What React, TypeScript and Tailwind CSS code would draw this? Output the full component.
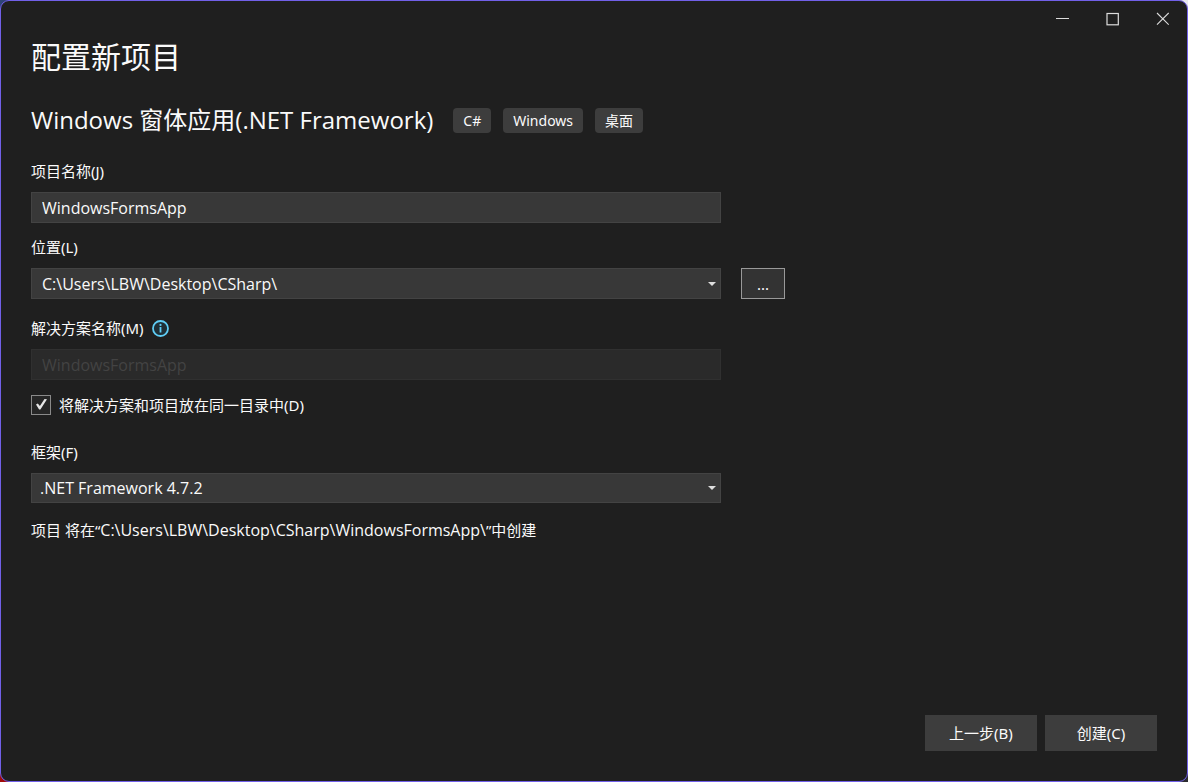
import React, { useState } from 'react';

const TAGS = ['C#', 'Windows', '桌面'];

const LOCATIONS = ['C:\\Users\\LBW\\Desktop\\CSharp\\'];

const FRAMEWORKS = ['.NET Framework 4.7.2'];

const fieldClass = "block w-full rounded-none border border-[#434343] bg-[#383838] font-['Open_Sans','Noto_Sans_CJK_SC',sans-serif] text-base text-[#fafafa] outline-none";

interface FieldProps {
  id: string;
  label: string;
  icon?: React.ReactNode;
  className?: string;
  children: React.ReactNode;
}

const Field: React.FC<FieldProps> = ({ id, label, icon, className = '', children }) => (
  <div className={className}>
    <div className="mb-[9px] flex items-center gap-2">
      <label htmlFor={id} className="leading-6">{label}</label>
      {icon}
    </div>
    {children}
  </div>
);

interface ComboProps {
  id: string;
  options: string[];
  className: string;
}

const Combo: React.FC<ComboProps> = ({ id, options, className }) => (
  <div className="relative w-full max-w-[690px]">
    <select id={id} className={`${fieldClass} ${className} appearance-none pr-6`}>
      {options.map((option) => (
        <option key={option}>{option}</option>
      ))}
    </select>
    <svg className="pointer-events-none absolute top-1/2 right-[5px] -translate-y-1/2" width="8" height="4" viewBox="0 0 8 4">
      <path d="M0 0h8L4 4z" fill="#dedede" />
    </svg>
  </div>
);

const InfoIcon = () => (
  <svg width="17" height="17" viewBox="0 0 17 17" fill="none">
    <circle cx="8.5" cy="8.5" r="7.5" fill="#1f2f36" stroke="#5fcdf5" strokeWidth="1.8" />
    <path d="M8.5 7v5.5" stroke="#5fcdf5" strokeWidth="1.8" />
    <circle cx="8.5" cy="4.9" r="1.1" fill="#5fcdf5" />
  </svg>
);

const WindowControls = () => (
  <header className="flex h-9 justify-end">
    <button type="button" aria-label="最小化" className="flex w-[50px] items-center justify-center">
      <svg width="14" height="14" viewBox="0 0 14 14">
        <path d="M1 6.5h13" stroke="#dcdcdc" />
      </svg>
    </button>
    <button type="button" aria-label="最大化" className="flex w-[50px] items-center justify-center">
      <svg width="14" height="14" viewBox="0 0 14 14">
        <rect x="2" y="1.5" width="11.3" height="11.3" fill="none" stroke="#dcdcdc" strokeWidth="1.2" />
      </svg>
    </button>
    <button type="button" aria-label="关闭" className="flex w-[50px] items-center justify-center">
      <svg width="14" height="14" viewBox="0 0 14 14">
        <path d="M2 1l11.7 11.7M13.7 1L2 12.7" stroke="#dcdcdc" strokeWidth="1.1" />
      </svg>
    </button>
  </header>
);

const App: React.FC = () => {
  const [name, setName] = useState('WindowsFormsApp');
  const [sameFolder, setSameFolder] = useState(true);

  return (
    <div className="flex min-h-screen bg-[conic-gradient(#e8e8ee_25%,#2c2c30_0_50%,#a00a0a_0_75%,#2f4477_0)] font-['Noto_Sans','Noto_Sans_CJK_SC',sans-serif] text-[15px] text-[#fafafa]">
      <div className="flex flex-1 flex-col rounded-[9px] border border-[#7160e8] bg-[#1f1f1f]">
        <WindowControls />

        <main className="flex-1 px-[30px]">
          <h1 className="text-[30px] leading-10">配置新项目</h1>

          <div className="mt-[27px] flex flex-wrap items-center gap-x-5">
            <h2 className="font-['Open_Sans','Noto_Sans_CJK_SC',sans-serif] text-2xl leading-8">Windows 窗体应用(.NET Framework)</h2>
            <ul className="flex gap-3">
              {TAGS.map((tag) => (
                <li key={tag} className="rounded bg-[#3d3d3d] px-[10px] text-sm leading-[25px]">{tag}</li>
              ))}
            </ul>
          </div>

          <form className="mt-[23px]">
            <Field id="project-name" label="项目名称(J)">
              <input
                id="project-name"
                type="text"
                value={name}
                onChange={(e) => setName(e.target.value)}
                className={`${fieldClass} h-[31px] max-w-[690px] px-[10px]`}
              />
            </Field>

            <Field id="location" label="位置(L)" className="mt-3">
              <div className="flex gap-5">
                <Combo id="location" options={LOCATIONS} className="h-[31px] pl-[10px]" />
                <button type="button" className="h-[31px] w-11 shrink-0 border border-[#999999] bg-[#333333] pt-0.5">...</button>
              </div>
            </Field>

            <Field id="solution-name" label="解决方案名称(M)" icon={<InfoIcon />} className="mt-[17px]">
              <input
                id="solution-name"
                type="text"
                value={name}
                disabled
                className="block h-[31px] w-full max-w-[690px] border border-[#303030] bg-[#2a2a2a] px-[10px] font-['Open_Sans','Noto_Sans_CJK_SC',sans-serif] text-base text-[#434343]"
              />
            </Field>

            <label className="mt-[13px] flex items-center gap-2 leading-6">
              <span className="relative size-5">
                <input
                  type="checkbox"
                  checked={sameFolder}
                  onChange={(e) => setSameFolder(e.target.checked)}
                  className="block size-5 appearance-none border border-[#8a8a8a] bg-[#262626]"
                />
                {sameFolder && (
                  <svg className="pointer-events-none absolute inset-0" width="20" height="20" viewBox="0 0 20 20">
                    <path d="M5 9.6l1.8-1.1 2.1 2.6 4.6-7 2.5.1-6.6 10.3H8.1z" fill="#e6e6e6" />
                  </svg>
                )}
              </span>
              将解决方案和项目放在同一目录中(D)
            </label>

            <Field id="framework" label="框架(F)" className="mt-[23px]">
              <Combo id="framework" options={FRAMEWORKS} className="h-[30px] pl-2" />
            </Field>

            <p className="mt-[15px] leading-6">
              项目 将在“
              <span className="font-['Open_Sans',sans-serif] text-base">C:\Users\LBW\Desktop\CSharp\{name}\</span>
              ”中创建
            </p>
          </form>
        </main>

        <footer className="flex justify-end gap-2 p-[30px]">
          <button type="button" className="h-9 w-28 bg-[#3d3d3d]">上一步(B)</button>
          <button type="button" className="h-9 w-28 bg-[#3d3d3d]">创建(C)</button>
        </footer>
      </div>
    </div>
  );
};

export default App;
